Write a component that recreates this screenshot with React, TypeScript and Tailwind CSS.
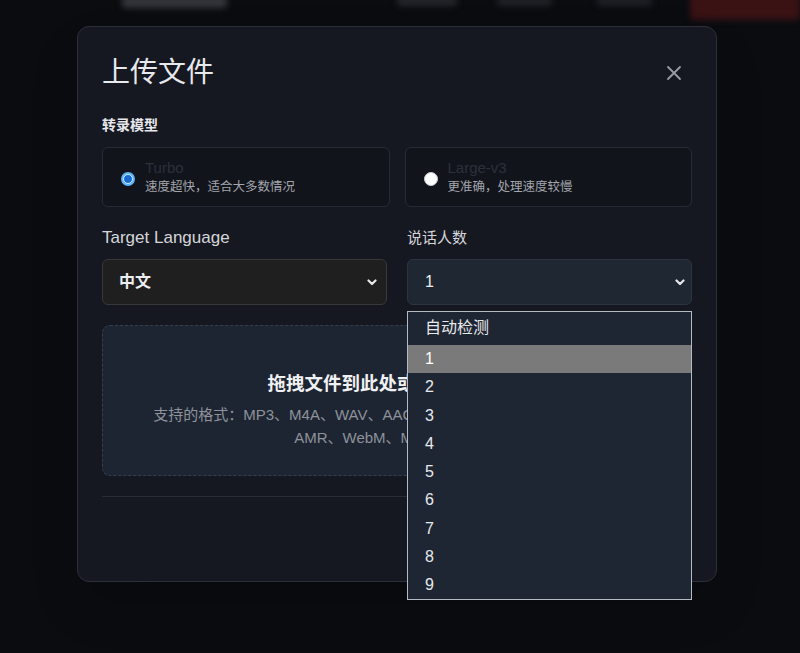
import React, { useState } from 'react';

const counts = ['自动检测', '1', '2', '3', '4', '5', '6', '7', '8', '9'];

const Chevron: React.FC = () => (
  <svg width="10" height="7" viewBox="0 0 10 7" className="shrink-0">
    <polyline points="1.5,1.5 5,5 8.5,1.5" fill="none" stroke="#e5e7eb" strokeWidth="2.2" strokeLinecap="round" strokeLinejoin="round" />
  </svg>
);

const App: React.FC = () => {
  const [model, setModel] = useState<'turbo' | 'large'>('turbo');
  const [speakers, setSpeakers] = useState('1');

  return (
    <div className="relative h-[653px] w-full overflow-hidden bg-[#0a0c10] font-['Liberation_Sans','Noto_Sans_CJK_SC',sans-serif]">
      {/* 背景页面（被弹窗遮住、模糊） */}
      <div className="flex h-[22px] items-start -translate-y-[6px] blur-[3px]">
        <div className="ml-[122px] mt-[2px] h-[12px] w-[105px] rounded bg-[#34363c]" />
        <div className="ml-[170px] mt-[2px] h-[10px] w-[60px] rounded bg-[#24262b]" />
        <div className="ml-[40px] mt-[2px] h-[10px] w-[55px] rounded bg-[#202227]" />
        <div className="ml-[45px] mt-[2px] h-[10px] w-[55px] rounded bg-[#1e2025]" />
        <div className="ml-[38px] h-[26px] flex-1 rounded bg-[#3a1214]" />
      </div>

      {/* 弹窗 */}
      <div className="absolute inset-0 pl-[77px] pt-[26px]">
        <div className="flex h-[556px] w-[640px] flex-col rounded-[12px] border border-[#2c2f3c] bg-[#161821] px-[24px] pt-[28px] shadow-2xl">
          <div className="flex h-[36px] items-center justify-between">
            <h2 className="text-[28px] font-normal leading-[36px] text-[#e8e9ec]">上传文件</h2>
            <button className="flex h-[36px] w-[36px] items-center justify-center">
              <svg width="16" height="16" viewBox="0 0 16 16">
                <path d="M2 2 L14 14 M14 2 L2 14" stroke="#9a9ca3" strokeWidth="1.8" strokeLinecap="round" />
              </svg>
            </button>
          </div>

          <div className="mt-[24px] text-[14px] font-semibold leading-[20px] text-[#e5e7eb]">转录模型</div>
          <div className="mt-[12px] grid h-[60px] grid-cols-2 gap-[15px]">
            {[
              { id: 'turbo' as const, name: 'Turbo', desc: '速度超快，适合大多数情况' },
              { id: 'large' as const, name: 'Large-v3', desc: '更准确，处理速度较慢' },
            ].map((m) => (
              <label
                key={m.id}
                onClick={() => setModel(m.id)}
                className="flex cursor-pointer items-center gap-[10px] rounded-[6px] border border-[#272a35] bg-[#12141b] pl-[18px]"
              >
                {model === m.id ? (
                  <span className="mt-[3px] flex h-[14px] w-[14px] items-center justify-center rounded-full bg-[#5cb6ff]">
                    <span className="h-[10px] w-[10px] rounded-full border-[1.5px] border-[#d6ecff] bg-[#1769d4]" />
                  </span>
                ) : (
                  <span className="mt-[3px] h-[14px] w-[14px] rounded-full border border-[#c9ccd2] bg-white" />
                )}
                <div className="flex flex-col">
                  <span className="text-[15px] leading-[20px] text-[#2c303b]">{m.name}</span>
                  <span className="text-[12.5px] leading-[18px] text-[#a3a6ad]">{m.desc}</span>
                </div>
              </label>
            ))}
          </div>

          <div className="mt-[19px] grid grid-cols-2 gap-[20px]">
            <div className="flex flex-col">
              <span className="text-[17px] leading-[24px] text-[#d4d6da]">Target Language</span>
              <div className="mt-[9px] flex h-[46px] items-center justify-between rounded-[6px] border border-[#383838] bg-[#1f1f1f] pl-[16px] pr-[9px]">
                <span className="text-[16px] font-semibold text-[#eceef1]">中文</span>
                <Chevron />
              </div>
            </div>
            <div className="relative flex flex-col">
              <span className="text-[15px] leading-[24px] text-[#d4d6da]">说话人数</span>
              <div className="mt-[9px] flex h-[46px] items-center justify-between rounded-[6px] border border-[#2c3441] bg-[#1f2733] pl-[17px] pr-[6px]">
                <span className="text-[16px] font-medium text-[#eceef1]">{speakers}</span>
                <Chevron />
              </div>
              <div className="absolute left-0 right-0 top-[85px] z-50 border border-[#b6bac2] bg-[#1f2633]">
                {counts.map((c, i) => (
                  <div
                    key={c}
                    onClick={() => setSpeakers(c)}
                    className={
                      (i === 0 ? 'h-[33px] pl-[17px] pb-[1px] ' : 'h-[28.25px] pl-[17px] ') +
                      'flex items-center text-[16px] text-[#e8e9ec] ' +
                      (c === speakers ? 'bg-[#7a7a7a] text-white' : '')
                    }
                  >
                    {c}
                  </div>
                ))}
              </div>
            </div>
          </div>

          <div className="mt-[20px] flex h-[151px] flex-col items-center rounded-[8px] border border-dashed border-[#363d4b] bg-[#1e2532] pt-[46px]">
            <span className="text-[18.5px] font-semibold leading-[24px] text-[#f0f1f3]">拖拽文件到此处或点击选择文件</span>
            <p className="mt-[7px] text-center text-[15px] leading-[23px] text-[#8d929b]">
              支持的格式：MP3、M4A、WAV、AAC、FLAC、OGG、OPUS、WMA、
              <br />
              AMR、WebM、MP4、MOV 等
            </p>
          </div>

          <div className="mt-[20px] h-px bg-[#2a2d38]" />

          <div className="mt-[22px] flex justify-end gap-[12px]">
            <button className="h-[40px] rounded-[6px] border border-[#383b47] px-[18px] text-[14px] text-[#d4d6da]">取消</button>
            <button className="h-[40px] rounded-[6px] bg-[#2563eb] px-[18px] text-[14px] text-white">开始上传</button>
          </div>
        </div>
      </div>
    </div>
  );
};

export default App;
